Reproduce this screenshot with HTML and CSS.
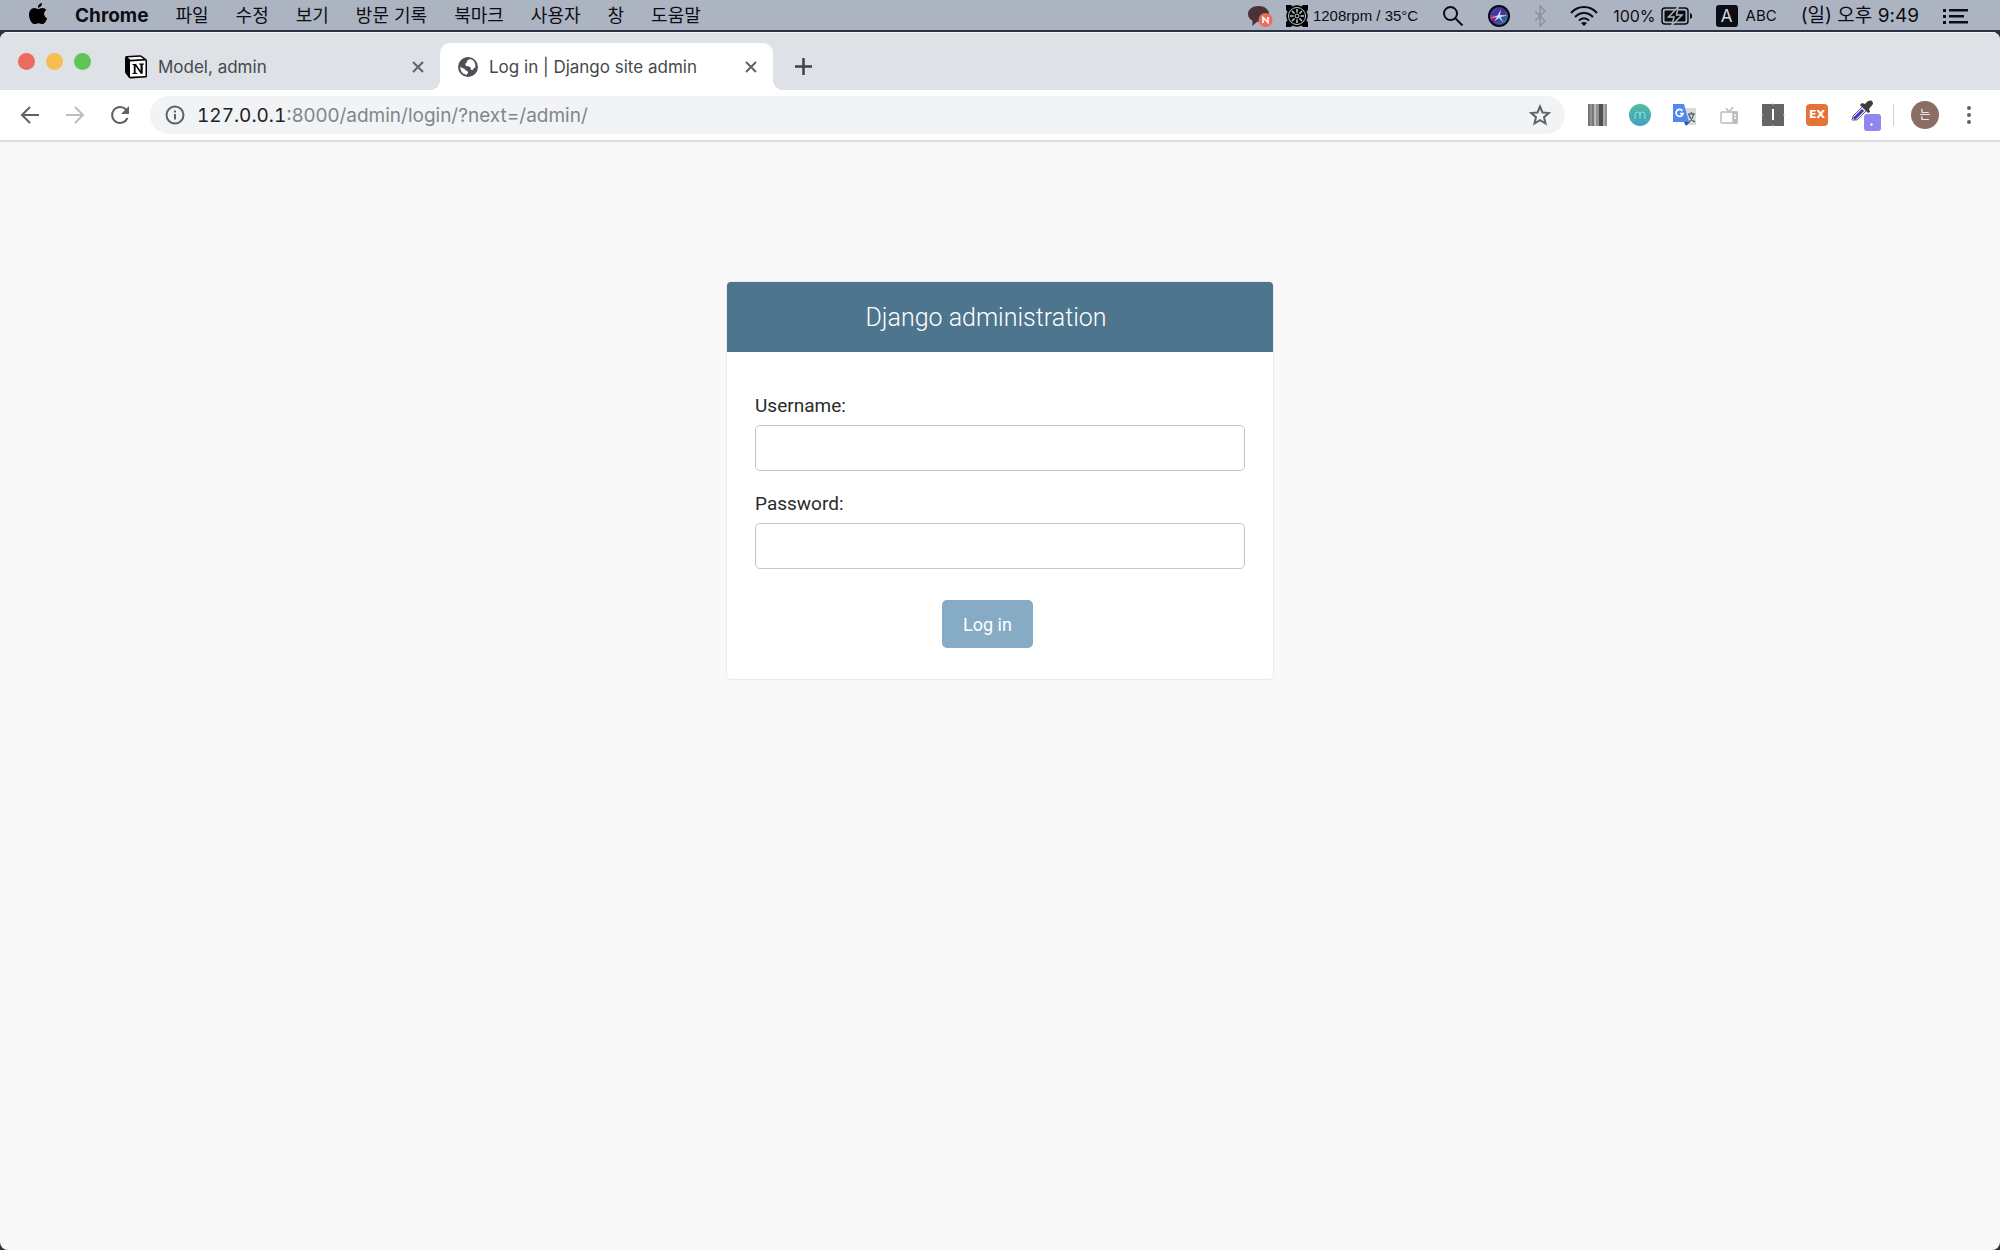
FILE: index.html
```
<!DOCTYPE html>
<html lang="ko">
<head>
    <meta charset="UTF-8">
    <meta name="viewport" content="width=device-width, initial-scale=1.0">
    <title>Log in | Django site admin</title>
    <link rel="stylesheet" href="styles.css">
</head>
<body>
    <!-- menu bar -->
    <header class="menubar">
        <nav class="menus">
            <svg class="apple" width="20" height="24" viewBox="0 0 20 24"><path d="M14 1c.2 2.200-1.700 4.800-4 4.700C9.700 3.500 11.800 1.200 14 1zM10.200 7c1 0 2.300-1.200 4.300-1.100 1.500.1 3 .8 3.900 2.200-3.400 2-2.800 6.700.8 8.100-.9 2.600-2.700 5.800-4.700 5.900-1.500 0-2.100-.9-3.900-.9s-2.500.9-3.900.9C3.700 22.200 1 16.800 1 12.700 1 8.500 3.600 6.100 6.200 6 8 6 9.200 7 10.200 7z"/></svg>
            <b class="app">Chrome</b>
            <span>파일</span>
            <span>수정</span>
            <span>보기</span>
            <span>방문 기록</span>
            <span>북마크</span>
            <span>사용자</span>
            <span>창</span>
            <span>도움말</span>
        </nav>
        <div class="status">
            <div class="group fan">
                <svg width="26" height="24" viewBox="0 0 26 24"><path d="M11.500 2C5.500 2 1 5.500 1 10c0 3 1.800 5.400 4.600 6.900L5.200 22l5-4.200C17 18 22 14.600 22 10S17.500 2 11.500 2z" fill="#4b3238"/><circle cx="18.500" cy="16" r="7" fill="#ef6a5c"/><path d="M16 19v-5.500l5 5V13" fill="none" stroke="#fff" stroke-width="1.700"/></svg>
                <svg class="fanicon" width="22" height="24" viewBox="0 0 22 24"><path d="M0 1h5l1.500 1.500Q11 0 15.500 2.500L17 1h5v5l-1.500 1.500Q23 12 20.500 16.500L22 18v5h-5l-1.500-1.500Q11 24 6.500 21.500L5 23H0v-5l1.500-1.500Q-1 12 1.500 7.500L0 6z"/><g fill="none" stroke="#c3c9d4"><circle cx="11" cy="12" r="8.500"/><circle cx="11" cy="12" r="2"/><path d="M11 5v3.500M11 15.500V19M4 12h3.500M14.500 12H18M6 7l2.500 2.500M13.500 14.500L16 17M6 17l2.500-2.500M13.500 9.500L16 7" stroke-width="1.500"/></g></svg>
                <span class="rpm">1208rpm / 35°C</span>
            </div>
            <svg width="22" height="22" viewBox="0 0 22 22" fill="none" stroke="#0c0d14" stroke-width="2"><circle cx="8.500" cy="8.500" r="6.500"/><path d="M13.500 13.500l7 7"/></svg>
            <svg width="22" height="22" viewBox="0 0 22 22"><defs><linearGradient id="siri" x2="1" y2="1"><stop stop-color="#2a55b0"/><stop offset=".5" stop-color="#512a92"/><stop offset="1" stop-color="#2397a0"/></linearGradient></defs><circle cx="11" cy="11" r="11" fill="#080a18"/><circle cx="11" cy="11" r="9" fill="url(#siri)"/><path d="M11 11L3 15.500a9 9 0 0 1-.8-5.500z" fill="#b02c88"/><path d="M2.500 13l7-2.500 3.500-6-1 5.500 7.500.5-7 1.500 3 5.500-4.500-4.500-5 3.500 3-4.500z" fill="#bfe6f7"/></svg>
            <svg width="12" height="22" viewBox="0 0 12 22" fill="none" stroke="#8b919d" stroke-width="1.500"><path d="M1 6l10 10-5 5V1l5 5L1 16"/></svg>
            <div class="group">
                <svg class="wifi" width="28" height="20" viewBox="0 0 28 20" fill="none" stroke="#0c0d14" stroke-width="2"><path d="M1 7C8-1 20-1 27 7M5 11c5-5.500 13-5.500 18 0M9 14.500c3-3 7-3 10 0"/><path d="M11 17c2-1.500 4-1.500 6 0l-3 3z" fill="#0c0d14" stroke="none"/></svg>
                <span>100%</span>
                <svg width="31" height="20" viewBox="0 0 31 20"><rect x="1" y="2" width="26" height="16" rx="3" fill="none" stroke="#0c0d14" stroke-width="1.500"/><rect x="3.500" y="4.500" width="21" height="11" rx="1" fill="#0c0d14"/><path d="M29 7c3 1 3 5 0 6z" fill="#0c0d14"/><path d="M17 1L7.500 11H13l-2 8 10-10h-5.500z" fill="#0c0d14" stroke="#adb4c1" stroke-width="1.500"/></svg>
            </div>
            <div class="group abc">
                <span class="lang">A</span>
                <span>ABC</span>
            </div>
            <span class="clock">(일) 오후 9:49</span>
            <svg width="25" height="16" viewBox="0 0 25 16" fill="#0c0d14"><path d="M0 1h3v3H0zM0 7h3v3H0zM0 13h3v3H0zM6 1h19v2.500H6zM6 7h15v2.500H6zM6 13h19v2.500H6z"/></svg>
        </div>
    </header>

    <!-- browser window -->
    <div class="window">
        <div class="tabs">
            <div class="lights">
                <i class="red"></i>
                <i class="yellow"></i>
                <i class="green"></i>
            </div>
            <div class="tab">
                <svg width="22" height="24" viewBox="0 0 22 24"><path d="M1.500 1L15 .3q1 0 2 .7l4 3q1 .7 1 2v15q0 1.500-1.500 1.600L6 23.500q-1.500 0-2.300-1L1 19q-1-1-1-2.500V2.700Q0 1.200 1.500 1z"/><path d="M2.500 2.500L15.500 1.700 18.500 4 5.500 4.700z" fill="#fff"/><path d="M5 6.500L20.500 5.600V20.900L5 21.800z" fill="#fff"/><path d="M7.500 9h3.500l4.500 6.800V9.700l-1.400-.3v-.9H19v.9l-1.300.4v9h-1.900l-5.200-7.600V17.700l1.600.4v.9H7.500v-.9l1.300-.4v-7.400l-1.300-.3z"/></svg>
                <span class="title">Model, admin</span>
                <button class="close" aria-label="close tab"><svg width="12" height="12" viewBox="0 0 12 12"><path d="M1 1l10 10M11 1L1 11"/></svg></button>
            </div>
            <div class="tab active">
                <svg width="20" height="20" viewBox="0 0 20 20"><circle cx="10" cy="10" r="10" fill="#4d5156"/><path d="M12 2c-1 1-3 1-3 2.500S7 6 7.500 8s3 1 4.500 2 0 3 2 3 1-2.500 3.500-2.500C17.500 5.500 16 3 12 2zM2.500 9.500c1.500 2 4 1.500 4.500 3s2.500 1 3 2.500-1.500 1.500-1 2.700C5.500 18 1.500 14 2.500 9.500z" fill="#fff"/></svg>
                <span class="title">Log in | Django site admin</span>
                <button class="close" aria-label="close tab"><svg width="12" height="12" viewBox="0 0 12 12"><path d="M1 1l10 10M11 1L1 11"/></svg></button>
            </div>
            <button class="newtab" aria-label="new tab"><svg width="17" height="17" viewBox="0 0 17 17"><path d="M8.500 0v17M0 8.500h17"/></svg></button>
        </div>

        <div class="toolbar">
            <div class="nav">
                <button aria-label="back"><svg width="24" height="24" viewBox="0 0 24 24"><path d="M21 12H4M12 4l-8 8 8 8"/></svg></button>
                <button class="off" aria-label="forward" disabled><svg width="24" height="24" viewBox="0 0 24 24"><path d="M3 12h17M12 4l8 8-8 8"/></svg></button>
                <button aria-label="reload"><svg width="24" height="24" viewBox="0 0 24 24"><path d="M19.500 15A8 8 0 1 1 18 6.500"/><path d="M21 3v8h-8z" fill="#5f6368" stroke="none"/></svg></button>
            </div>
            <div class="omnibox">
                <svg width="20" height="20" viewBox="0 0 20 20"><circle cx="10" cy="10" r="8.500"/><path d="M10 9v5.500M10 5.500v2"/></svg>
                <div class="url" role="textbox" aria-label="address" contenteditable="true" spellcheck="false"><span class="host">127.0.0.1</span>:8000/admin/login/?next=/admin/</div>
                <button aria-label="bookmark"><svg width="22" height="22" viewBox="0 0 22 22"><path d="M11 2.500l2.500 6 6.300.5-4.800 4.200 1.500 6.300-5.500-3.400-5.500 3.400L7 13.200 2.200 9l6.300-.5z"/></svg></button>
            </div>
            <div class="exts">
                <svg width="24" height="24" viewBox="0 0 24 24"><path d="M3 1h19v22H3z" fill="#929292"/><path d="M3 1h2v22H3zM7 1h2v22H7z" fill="#777"/><path d="M9 1h2v22H9z" fill="#bbb"/><path d="M14 1h4v22h-4z" fill="#505050"/><path d="M18 1h2v22h-2z" fill="#aaa"/></svg>
                <svg width="24" height="24" viewBox="0 0 24 24"><defs><linearGradient id="teal" x2="0" y2="1"><stop stop-color="#4fbf9c"/><stop offset="1" stop-color="#459fc1"/></linearGradient></defs><circle cx="11" cy="12" r="11" fill="url(#teal)"/><path d="M6 16v-4q0-3 2.500-3T11 12v4M11 12q0-3 2.500-3t2.500 3v4" fill="none" stroke="#8fe3dd"/></svg>
                <svg width="24" height="24" viewBox="0 0 24 24"><path d="M9 5h14v17H13z" fill="#dadada"/><path d="M15 11h7M18.500 9v2M20.500 11q-1 6-5 8M16 12q2 5 6 7" fill="none" stroke="#5c6c78" stroke-width="1.500"/><path d="M11 19h6l-4 4z" fill="#2d50b5"/><path d="M0 1h11l5 18H0z" fill="#5089ee"/><path d="M9.500 8A3.500 3.500 0 1 0 10 10.500H7" fill="none" stroke="#fff" stroke-width="1.700"/></svg>
                <svg width="24" height="24" viewBox="0 0 24 24" fill="none" stroke="#bcbcbc" stroke-width="1.500"><rect x="4" y="9" width="16" height="11" rx="1"/><path d="M9 5l3 4 4-5"/><path d="M16 9h4v11h-4z" fill="#bcbcbc"/><path d="M17 12h2M17 15h2" stroke="#fff"/></svg>
                <svg width="24" height="24" viewBox="0 0 24 24"><path d="M1 1h22v22H1z" fill="#656565"/><path d="M12 6v11" stroke="#fff" stroke-width="2"/><path d="M12 0v2M12 22v2M0 12h2M22 12h2" stroke="#ccc"/></svg>
                <span class="ex">EX</span>
                <svg width="32" height="32" viewBox="0 0 32 32"><path d="M3 21l1-4L14 7l4 4L8 21z" fill="#eee" stroke="#666"/><path d="M5 20l9-9" stroke="#3c31d8" stroke-width="3"/><path d="M11 6l2-2 3 1 3-3q5-2 5 3l-4 5 1 3-2 1z" fill="#3e3e3e"/><rect x="15" y="15" width="17" height="17" rx="3" fill="#8f86f2"/><circle cx="22.500" cy="25.500" r="1.200" fill="#fff"/></svg>
            </div>
            <div class="profile">
                <span class="avatar">는</span>
                <button aria-label="menu"><svg width="6" height="20" viewBox="0 0 6 20"><circle cx="3" cy="3" r="2"/><circle cx="3" cy="10" r="2"/><circle cx="3" cy="17" r="2"/></svg></button>
            </div>
        </div>

        <!-- login page -->
        <main class="page">
            <div class="login">
                <h1>Django administration</h1>
                <form>
                    <label for="username">Username:</label>
                    <input type="text" id="username">
                    <label for="password">Password:</label>
                    <input type="password" id="password">
                    <div class="submit">
                        <button type="button">Log in</button>
                    </div>
                </form>
            </div>
        </main>
    </div>
</body>
</html>
```
FILE: styles.css
```
*{
    margin: 0;
    padding: 0;
    box-sizing: border-box;
}
body{
    background: #2b3142;
    font-family: Inter, "Noto Sans CJK KR", sans-serif;
    min-height: 100vh;
    display: flex;
    flex-direction: column;
}
svg{
    display: block;
    flex: none;
}
button{
    border: none;
    background: none;
    cursor: pointer;
}

/* menu bar */
.menubar{
    height: 30px;
    margin-bottom: 2px;
    background: #adb4c1;
    color: #0c0d14;
    display: flex;
    align-items: center;
    justify-content: space-between;
    padding: 1px 32px 0 28px;
    font-size: 18px;
    line-height: 28px;
    white-space: nowrap;
}
.menus{
    display: flex;
    align-items: center;
    gap: 27px;
}
.app{
    font-size: 19px;
}
.apple{
    margin-bottom: 3px;
}
.status{
    display: flex;
    align-items: center;
    gap: 24px;
    font-size: 16px;
}
.group{
    display: flex;
    align-items: center;
    gap: 5px;
}
.fanicon{
    margin-left: 8px;
}
.rpm{
    font-family: "Liberation Sans", sans-serif;
    font-size: 15px;
}
.wifi{
    margin-right: 10px;
}
.lang{
    width: 22px;
    height: 22px;
    border-radius: 3px;
    background: #0c0d14;
    color: #d5dae4;
    font-size: 17px;
    text-align: center;
    line-height: 22px;
}
.abc{
    font-size: 15px;
    gap: 8px;
}
.clock{
    font-size: 19px;
}

/* window */
.window{
    flex: 1;
    display: flex;
    flex-direction: column;
    background: #f8f8f8;
    border-radius: 8px;
    overflow: hidden;
}
.tabs{
    height: 58px;
    background: #dee1e6;
    border-top: 1px solid #f1f3f5;
    display: flex;
    align-items: flex-end;
    font-size: 17px;
    color: #45494d;
}
.lights{
    display: flex;
    gap: 11px;
    padding-left: 18px;
    align-self: center;
    width: 107px;
}
.lights i{
    width: 17px;
    height: 17px;
    border-radius: 50%;
}
.red{
    background: #ed6a5f;
}
.yellow{
    background: #f5bf50;
}
.green{
    background: #61c555;
}
.tab{
    width: 333px;
    height: 47px;
    display: flex;
    align-items: center;
    padding: 0 16px 0 18px;
    gap: 11px;
    border-radius: 10px 10px 0 0;
}
.active{
    background: #fff;
    position: relative;
}
/* curved feet of the active tab */
.active::before, .active::after{
    content: '';
    position: absolute;
    bottom: 0;
    width: 10px;
    height: 10px;
}
.active::before{
    left: -10px;
    background: radial-gradient(circle at 0 0, transparent 10px, #fff 10px);
}
.active::after{
    right: -10px;
    background: radial-gradient(circle at 100% 0, transparent 10px, #fff 10px);
}
.title{
    flex: 1;
}
.close svg{
    fill: none;
    stroke: #5f6368;
    stroke-width: 2;
}
.newtab{
    height: 47px;
    padding: 0 22px;
}
.newtab svg{
    stroke: #3f4347;
    stroke-width: 2.5;
}

/* toolbar */
.toolbar{
    height: 52px;
    background: #fff;
    border-bottom: 2px solid #dcdcdc;
    display: flex;
    align-items: center;
    padding: 0 28px 0 18px;
}
.nav{
    display: flex;
    gap: 21px;
}
.nav svg{
    fill: none;
    stroke: #5f6368;
    stroke-width: 2;
}
.nav .off svg{
    stroke: #babcbe;
}
.omnibox{
    flex: 1;
    height: 38px;
    margin: 0 20px 0 18px;
    padding: 0 14px 0 15px;
    background: #f1f3f4;
    border-radius: 19px;
    display: flex;
    align-items: center;
    gap: 12px;
}
.omnibox svg{
    fill: none;
    stroke: #5f6368;
    stroke-width: 2;
}
.url{
    flex: 1;
    font-size: 19px;
    color: #80868b;
    outline: none;
}
.host{
    color: #202124;
    font-variant-numeric: tabular-nums;
}
.exts{
    display: flex;
    align-items: center;
    gap: 20px;
}
.ex{
    width: 22px;
    height: 22px;
    margin: 0 1px;
    border-radius: 4px;
    background: #e57338;
    color: #fff;
    font: bold 11px "DejaVu Sans", sans-serif;
    line-height: 22px;
    text-align: center;
}
.profile{
    display: flex;
    align-items: center;
    gap: 27px;
    margin-left: 12px;
    padding-left: 18px;
    background: linear-gradient(#cfd1d4, #cfd1d4) left / 1px 22px no-repeat;
}
.avatar{
    width: 28px;
    height: 28px;
    border-radius: 50%;
    background: #8a6d63;
    color: #fff;
    font-size: 12px;
    line-height: 28px;
    text-align: center;
}
.profile svg{
    fill: #5f6368;
}

/* login page */
.page{
    flex: 1;
    padding: 139px 20px;
    font-family: Roboto, sans-serif;
}
.login{
    width: 548px;
    max-width: 100%;
    margin: auto;
    background: #fff;
    border: 1px solid #eaeaea;
    border-radius: 5px;
    overflow: hidden;
}
.login h1{
    background: #4d758e;
    color: #fff;
    font-size: 25px;
    font-weight: 300;
    line-height: 68px;
    text-align: center;
    padding: 2px 28px 0 0;
}
form{
    padding: 42px 28px 31px;
}
label{
    display: block;
    font-size: 19px;
    line-height: 24px;
    color: #2b2b2b;
    margin-bottom: 7px;
}
form input{
    display: block;
    width: 100%;
    height: 46px;
    border: 1px solid #c4c4c4;
    border-radius: 5px;
    padding: 8px;
    font-size: 18px;
    margin-bottom: 21px;
    outline: none;
}
.submit{
    padding: 10px 0 0 187px;
}
.submit button{
    height: 48px;
    padding: 0 21px;
    border-radius: 5px;
    background: #86abc4;
    color: #fff;
    font: 18px Roboto, sans-serif;
}
```
